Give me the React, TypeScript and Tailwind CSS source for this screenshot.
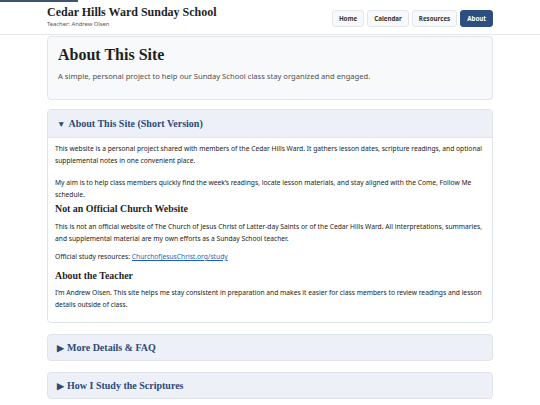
const serif = "font-['Georgia','Liberation_Serif',serif]";
const sans = "font-['Noto_Sans','Open_Sans',sans-serif]";

function NavButton({ label, active }: { label: string; active?: boolean }) {
  return (
    <button
      className={
        active
          ? "h-[17px] rounded-[3px] border border-[#2c4f80] bg-[#2c4f80] px-[6px] text-[6.2px] font-bold text-white"
          : "h-[17px] rounded-[3px] border border-[#e3e6ea] bg-[#f8f9fa] px-[6px] text-[6.2px] font-bold text-[#333]"
      }
    >
      {label}
    </button>
  );
}

function Collapsed({ title }: { title: string }) {
  return (
    <div className="h-[27px] rounded-[4px] border border-[#dfe4ea] bg-[#edf1f7] px-[9px] flex items-center">
      <span className={`${serif} text-[10px] font-bold text-[#2c4a7a]`}>
        <span className="text-[8.5px] mr-[3px]">▶</span>
        {title}
      </span>
    </div>
  );
}

export default function App() {
  return (
    <div className={`${sans} min-h-[405px] bg-white text-[#222]`}>
      <div className="h-[2px] w-[78px] bg-[#3d5373]" />
      <header className="border-b border-[#e4e6e9] h-[33px]">
        <div className="mx-auto w-[446px] flex items-start justify-between pt-[3px]">
          <div>
            <div className={`${serif} text-[12px] font-bold leading-[14px] text-[#1f1f1f]`}>
              Cedar Hills Ward Sunday School
            </div>
            <div className="mt-[1px] text-[5.8px] leading-[8px] text-[#555]">Teacher: Andrew Olsen</div>
          </div>
          <nav className="flex gap-[3px] pt-[5px]">
            <NavButton label="Home" />
            <NavButton label="Calendar" />
            <NavButton label="Resources" />
            <NavButton label="About" active />
          </nav>
        </div>
      </header>

      <main className="mx-auto w-[446px] pt-[1px]">
        <section className="h-[64px] rounded-[4px] border border-[#e2e5e9] bg-[#f8f9fa] px-[10px] pt-[8px]">
          <h1 className={`${serif} text-[16px] font-bold leading-[20px] text-[#1f1f1f]`}>About This Site</h1>
          <p className="mt-[6px] text-[7.6px] leading-[10px] text-[#4f4f4f]">
            A simple, personal project to help our Sunday School class stay organized and engaged.
          </p>
        </section>

        <section className="mt-[9px] overflow-hidden rounded-[4px] border border-[#dfe4ea] bg-white">
          <div className="h-[28px] bg-[#edf1f7] px-[9px] flex items-center border-b border-[#e3e7ec]">
            <span className={`${serif} text-[10px] font-bold text-[#2c4a7a]`}>
              <span className="text-[8.5px] mr-[3px]">▼</span>
              About This Site (Short Version)
            </span>
          </div>
          <div className="pl-[7px] pr-[4px] pt-[5px] pb-[11px] text-[6.7px] leading-[12px] text-[#222]">
            <p>
              This website is a personal project shared with members of the Cedar Hills Ward. It gathers lesson dates, scripture readings, and optional
              supplemental notes in one convenient place.
            </p>
            <p className="mt-[10px]">
              My aim is to help class members quickly find the week’s readings, locate lesson materials, and stay aligned with the Come, Follow Me
              schedule.
            </p>
            <h3 className={`${serif} mt-[1px] text-[9.9px] font-bold leading-[14px] text-[#1f1f1f]`}>Not an Official Church Website</h3>
            <p className="mt-[5px]">
              This is not an official website of The Church of Jesus Christ of Latter-day Saints or of the Cedar Hills Ward. All interpretations, summaries,
              and supplemental material are my own efforts as a Sunday School teacher.
            </p>
            <p className="mt-[6px]">
              Official study resources:{" "}
              <a className="text-[#1f5fbf] underline" href="#">
                ChurchofJesusChrist.org/study
              </a>
            </p>
            <h3 className={`${serif} mt-[6px] text-[9.9px] font-bold leading-[14px] text-[#1f1f1f]`}>About the Teacher</h3>
            <p className="mt-[4px]">
              I’m Andrew Olsen. This site helps me stay consistent in preparation and makes it easier for class members to review readings and lesson
              details outside of class.
            </p>
          </div>
        </section>

        <div className="mt-[11px] flex flex-col gap-[11px]">
          <Collapsed title="More Details & FAQ" />
          <Collapsed title="How I Study the Scriptures" />
        </div>
      </main>
    </div>
  );
}
